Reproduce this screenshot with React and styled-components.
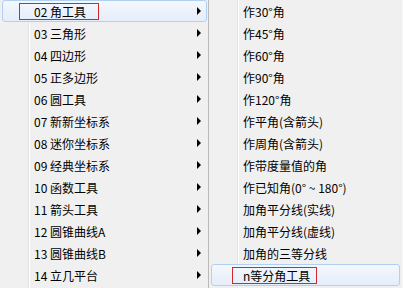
import styled, { createGlobalStyle } from 'styled-components';

const GlobalStyle = createGlobalStyle`
  html, body {
    margin: 0;
    padding: 0;
    background: #f0f0f0;
  }
  body {
    font-family: "Noto Sans CJK SC", "Noto Sans", sans-serif;
    font-size: 12px;
    color: #000;
  }
`;

const Screen = styled.div`
  width: 403px;
  height: 288px;
  display: flex;
  overflow: hidden;
  background: #f0f0f0;
`;

// gutter line drawn as a background stripe: grey then white
const Menu = styled.div`
  box-sizing: border-box;
  width: ${({ $width }) => $width};
  flex: ${({ $grow }) => ($grow ? 1 : 'none')};
  height: 288px;
  padding: 0 ${({ $padRight }) => $padRight}px 0 2px;
  border-right: 1px solid ${({ $edge }) => $edge};
  background:
    linear-gradient(
      to right,
      transparent 28px,
      #e2e3e3 28px,
      #e2e3e3 29px,
      #ffffff 29px,
      #ffffff 30px,
      transparent 30px
    ),
    #f0f0f0;
  display: flex;
  flex-direction: column;
`;

const Row = styled.div`
  box-sizing: border-box;
  height: 22px;
  display: flex;
  align-items: center;
  padding-left: 31px;
  border: 1px solid ${({ $active }) => ($active ? '#b2d0f4' : 'transparent')};
  border-radius: 3px;
  background: ${({ $active }) =>
    $active ? 'linear-gradient(#f4f8fd, #e4edf9)' : 'transparent'};
  white-space: nowrap;
  line-height: 16px;
`;

const Label = styled.span`
  box-sizing: border-box;
  display: inline-block;
  height: 17px;
  line-height: 15px;
  border: 1px solid ${({ $marked }) => ($marked ? '#d2282b' : 'transparent')};
  margin-left: -${({ $pl }) => $pl}px;
  padding: 0 ${({ $pr }) => $pr}px 0 ${({ $pl }) => $pl - 1}px;
`;

const Arrow = styled.span`
  margin-left: auto;
  margin-right: 5px;
  width: 0;
  height: 0;
  border-top: 4px solid transparent;
  border-bottom: 4px solid transparent;
  border-left: 4px solid #000;
`;

const left = [
  '02 角工具',
  '03 三角形',
  '04 四边形',
  '05 正多边形',
  '06 圆工具',
  '07 新新坐标系',
  '08 迷你坐标系',
  '09 经典坐标系',
  '10 函数工具',
  '11 箭头工具',
  '12 圆锥曲线A',
  '13 圆锥曲线B',
  '14 立几平台',
];

const right = [
  '作30°角',
  '作45°角',
  '作60°角',
  '作90°角',
  '作120°角',
  '作平角(含箭头)',
  '作周角(含箭头)',
  '作带度量值的角',
  '作已知角(0° ~ 180°)',
  '加角平分线(实线)',
  '加角平分线(虚线)',
  '加角的三等分线',
  'n等分角工具',
];

export default function App() {
  return (
    <>
      <GlobalStyle />
      <Screen>
        <Menu $width="209px" $padRight={1} $edge="#b9b9b9">
          {left.map((text, i) => (
            <Row key={text} $active={i === 0}>
              {i === 0 ? (
                <Label $marked $pl={15} $pr={12}>{text}</Label>
              ) : (
                <Label $pl={1} $pr={0}>{text}</Label>
              )}
              <Arrow />
            </Row>
          ))}
        </Menu>
        <Menu $grow $padRight={2} $edge="#f7f7f7">
          {right.map((text, i) => (
            <Row key={text} $active={i === right.length - 1}>
              {i === right.length - 1 ? (
                <Label $marked $pl={11} $pr={6}>{text}</Label>
              ) : (
                <Label $pl={1} $pr={0}>{text}</Label>
              )}
            </Row>
          ))}
        </Menu>
      </Screen>
    </>
  );
}
